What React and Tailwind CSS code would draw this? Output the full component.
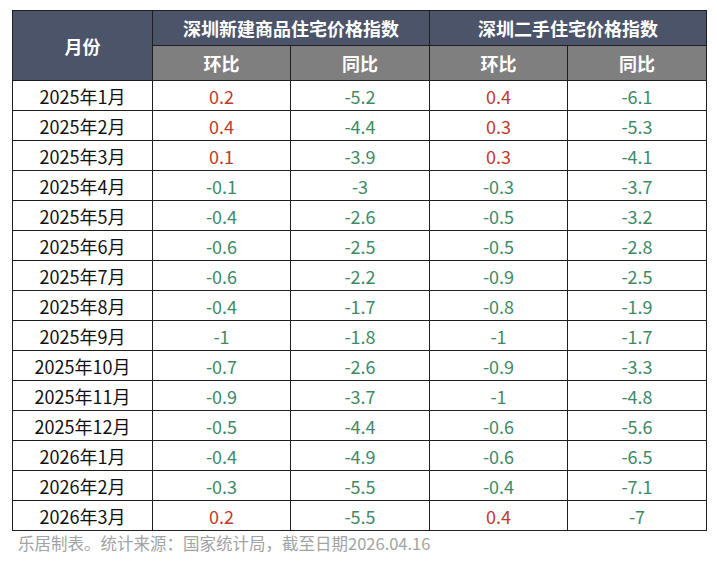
import React from 'react';

const rows = [
  ['2025年1月', '0.2', '-5.2', '0.4', '-6.1'],
  ['2025年2月', '0.4', '-4.4', '0.3', '-5.3'],
  ['2025年3月', '0.1', '-3.9', '0.3', '-4.1'],
  ['2025年4月', '-0.1', '-3', '-0.3', '-3.7'],
  ['2025年5月', '-0.4', '-2.6', '-0.5', '-3.2'],
  ['2025年6月', '-0.6', '-2.5', '-0.5', '-2.8'],
  ['2025年7月', '-0.6', '-2.2', '-0.9', '-2.5'],
  ['2025年8月', '-0.4', '-1.7', '-0.8', '-1.9'],
  ['2025年9月', '-1', '-1.8', '-1', '-1.7'],
  ['2025年10月', '-0.7', '-2.6', '-0.9', '-3.3'],
  ['2025年11月', '-0.9', '-3.7', '-1', '-4.8'],
  ['2025年12月', '-0.5', '-4.4', '-0.6', '-5.6'],
  ['2026年1月', '-0.4', '-4.9', '-0.6', '-6.5'],
  ['2026年2月', '-0.3', '-5.5', '-0.4', '-7.1'],
  ['2026年3月', '0.2', '-5.5', '0.4', '-7'],
];

const Value = ({ v }) => (
  <td className={`h-[30px] border-[1.5px] border-[#1f1f1f] text-center ${v.startsWith('-') ? 'text-[#3f8a66]' : 'text-[#c0392b]'}`}>
    {v}
  </td>
);

export default function App() {
  return (
    <div className="w-[717px] h-[574px] bg-white pt-[10px] pl-[12px] font-['Noto_Sans_CJK_SC','Noto_Sans',sans-serif]">
      <table className="border-collapse w-[694px] table-fixed text-[18px] leading-none">
        <colgroup>
          <col className="w-[140px]" />
          <col className="w-[138px]" />
          <col className="w-[139px]" />
          <col className="w-[138px]" />
          <col className="w-[139px]" />
        </colgroup>
        <thead>
          <tr className="h-[35px]">
            <th rowSpan={2} className="bg-[#4b5468] text-white font-bold border-[1.5px] border-[#1f1f1f]">月份</th>
            <th colSpan={2} className="bg-[#4b5468] text-white font-bold border-[1.5px] border-[#1f1f1f]">深圳新建商品住宅价格指数</th>
            <th colSpan={2} className="bg-[#4b5468] text-white font-bold border-[1.5px] border-[#1f1f1f]">深圳二手住宅价格指数</th>
          </tr>
          <tr className="h-[35px]">
            {['环比', '同比', '环比', '同比'].map((t, i) => (
              <th key={i} className="bg-[#7f7f7f] text-white font-bold border-[1.5px] border-[#1f1f1f]">{t}</th>
            ))}
          </tr>
        </thead>
        <tbody>
          {rows.map(r => (
            <tr key={r[0]}>
              <td className="h-[30px] border-[1.5px] border-[#1f1f1f] text-center text-[#111]">{r[0]}</td>
              {r.slice(1).map((v, i) => <Value key={i} v={v} />)}
            </tr>
          ))}
        </tbody>
      </table>
      <p className="mt-[4px] pl-[6px] text-[16.5px] text-[#a3a3a3] leading-none">
        乐居制表。统计来源：国家统计局，截至日期2026.04.16
      </p>
    </div>
  );
}
